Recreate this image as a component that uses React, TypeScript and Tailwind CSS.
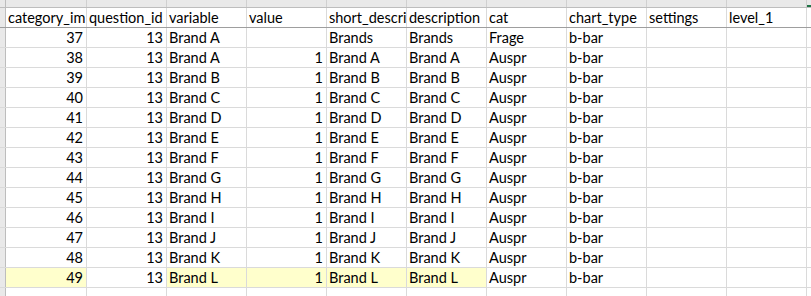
import React from 'react';

type Row = {
    id: number;
    q: number;
    variable: string;
    value: string;
    short: string;
    desc: string;
    cat: string;
    chart: string;
};

const brands = ['A', 'B', 'C', 'D', 'E', 'F', 'G', 'H', 'I', 'J', 'K', 'L'];

const rows: Row[] = [
    { id: 37, q: 13, variable: 'Brand A', value: '', short: 'Brands', desc: 'Brands', cat: 'Frage', chart: 'b-bar' },
    ...brands.map((b, i) => ({
        id: 38 + i,
        q: 13,
        variable: `Brand ${b}`,
        value: '1',
        short: `Brand ${b}`,
        desc: `Brand ${b}`,
        cat: 'Auspr',
        chart: 'b-bar',
    })),
];

const letters = ['A', 'B', 'C', 'D', 'E', 'F', 'G', 'H', 'I', 'J', 'K'];
const headers = ['category_im', 'question_id', 'variable', 'value', 'short_descri', 'description', 'cat', 'chart_type', 'settings', 'level_1', ''];

function Cell({
    children,
    right,
    hl,
    first,
}: {
    children?: React.ReactNode;
    right?: boolean;
    hl?: boolean;
    first?: boolean;
}) {
    return (
        <div
            className={`${first ? 'w-[81px]' : 'w-[80px]'} shrink-0 h-full border-r border-[#dadada] flex items-center overflow-hidden whitespace-nowrap px-[2px] pt-[1px] ${
                right ? 'justify-end pr-[3px]' : 'justify-start'
            } ${hl ? 'bg-[#ffffcc]' : ''}`}
        >
            {children}
        </div>
    );
}

export default function App() {
    return (
        <div className="w-[811px] h-[296px] overflow-hidden bg-white text-black text-[14.5px] font-['Lato','Open_Sans',sans-serif]">
            {/* column letters strip, mostly scrolled out of view */}
            <div className="flex h-[8px] bg-[#e9e9e9] border-b border-[#bdbdbd] overflow-hidden">
                <div className="w-[6px] shrink-0 border-r border-[#bdbdbd]" />
                {letters.map((l, i) => (
                    <div
                        key={l}
                        className={`${i === 0 ? 'w-[81px]' : 'w-[80px]'} shrink-0 h-full border-r border-[#d0d0d0] flex justify-center ${
                            l === 'K' ? 'border-b-2 border-b-[#217346]' : ''
                        }`}
                    >
                        <span className="-mt-[15px] leading-[20px] text-[#444]">{l}</span>
                    </div>
                ))}
            </div>

            {/* header row */}
            <div className="flex h-[20px] border-b border-[#9e9e9e]">
                <div className="w-[6px] shrink-0 bg-[#e9e9e9] border-r border-[#bdbdbd]" />
                {headers.map((h, i) => (
                    <Cell key={i} first={i === 0}>
                        {h}
                    </Cell>
                ))}
            </div>

            {rows.map((r) => {
                const hl = r.id === 49;
                return (
                    <div key={r.id} className="flex h-[20px] border-b border-[#dadada]">
                        <div className="w-[6px] shrink-0 bg-[#e9e9e9] border-r border-[#bdbdbd]" />
                        <Cell first right hl={hl}>
                            {r.id}
                        </Cell>
                        <Cell right>{r.q}</Cell>
                        <Cell hl={hl}>{r.variable}</Cell>
                        <Cell right hl={hl}>
                            {r.value}
                        </Cell>
                        <Cell hl={hl}>{r.short}</Cell>
                        <Cell hl={hl}>{r.desc}</Cell>
                        <Cell>{r.cat}</Cell>
                        <Cell>{r.chart}</Cell>
                        <Cell />
                        <Cell />
                        <Cell />
                    </div>
                );
            })}

            <div className="flex h-[20px] border-b border-[#dadada]">
                <div className="w-[6px] shrink-0 bg-[#e9e9e9] border-r border-[#bdbdbd]" />
                {letters.map((l, i) => (
                    <Cell key={l} first={i === 0} />
                ))}
            </div>
        </div>
    );
}
